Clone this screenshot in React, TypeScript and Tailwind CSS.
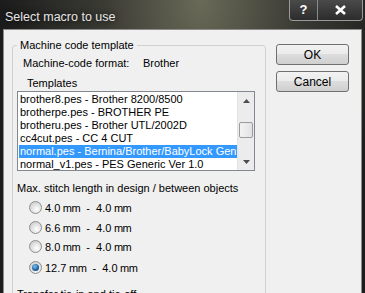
import React from "react";

const templates = [
  "brother8.pes - Brother 8200/8500",
  "brotherpe.pes - BROTHER PE",
  "brotheru.pes - Brother UTL/2002D",
  "cc4cut.pes - CC 4 CUT",
  "normal.pes - Bernina/Brother/BabyLock Gen",
  "normal_v1.pes - PES Generic Ver 1.0",
];

const stitchOptions = [
  { a: "4.0", b: "4.0" },
  { a: "6.6", b: "4.0" },
  { a: "8.0", b: "4.0" },
  { a: "12.7", b: "4.0" },
];

function Radio({ checked }: { checked?: boolean }) {
  return (
    <span className="w-[13px] h-[13px] rounded-full border border-[#8e8f8f] bg-[radial-gradient(circle_at_60%_65%,#ffffff,#d4d4d4_70%,#bcbcbc)] flex items-center justify-center shrink-0">
      {checked && (
        <span className="w-[7px] h-[7px] rounded-full bg-[radial-gradient(circle_at_40%_35%,#7fc3f0,#1d5e9c_60%,#0c3c6e)]" />
      )}
    </span>
  );
}

function ScrollBar() {
  return (
    <div className="w-[17px] flex flex-col bg-[#ececec] border-l border-[#e3e3e3]">
      <div className="h-[17px] flex items-center justify-center">
        <svg width="7" height="4" viewBox="0 0 7 4">
          <path d="M0 4 L3.5 0 L7 4 Z" fill="#4d4d4d" />
        </svg>
      </div>
      <div className="h-[13px]" />
      <div className="h-[16px] mx-[1px] rounded-[2px] border border-[#9a9a9a] bg-[linear-gradient(to_right,#f3f3f3,#e2e2e2)]" />
      <div className="flex-1" />
      <div className="h-[17px] flex items-center justify-center">
        <svg width="7" height="4" viewBox="0 0 7 4">
          <path d="M0 0 L3.5 4 L7 0 Z" fill="#4d4d4d" />
        </svg>
      </div>
    </div>
  );
}

function DialogButton({ label }: { label: string }) {
  return (
    <button className="w-[73px] h-[21px] rounded-[3px] border border-[#707070] bg-[linear-gradient(to_bottom,#f2f2f2_0%,#ebebeb_45%,#dddddd_50%,#cfcfcf_100%)] text-[12px] text-black leading-none">
      {label}
    </button>
  );
}

export default function App() {
  return (
    <div
      className="w-[365px] h-[293px] overflow-hidden flex flex-col bg-[radial-gradient(ellipse_at_55%_0%,#6a6a58_0%,#3a3a34_35%,#1c1c1c_70%)]"
      style={{ fontFamily: '"Liberation Sans", Arial, sans-serif' }}
    >
      {/* title bar */}
      <div className="h-[29px] flex items-start shrink-0">
        <div className="pl-[5px] pt-[8px] text-[12.5px] text-[#e6e6e6] [text-shadow:0_0_6px_#000]">
          Select macro to use
        </div>
        <div className="ml-auto mr-[2px] flex h-[21px] rounded-b-[4px] border border-t-0 border-[#9a9a9a] bg-[linear-gradient(to_bottom,#4a4a4a,#2c2c2c)] overflow-hidden">
          <div className="w-[28px] flex items-center justify-center text-white font-bold text-[13px] border-r border-[#8a8a8a]">
            ?
          </div>
          <div className="w-[44px] flex items-center justify-center">
            <svg width="11" height="10" viewBox="0 0 11 10">
              <path d="M1 1 L10 9 M10 1 L1 9" stroke="#ffffff" strokeWidth="2.6" />
            </svg>
          </div>
        </div>
      </div>

      {/* client area */}
      <div className="flex-1 mx-[3px] bg-[#f0f0f0] border border-[#8c8c8c] flex text-[11px] text-black">
        <div className="pl-[8px] pt-[8px] w-[262px] shrink-0">
          <fieldset className="border border-[#d0d0d0] rounded-[3px] h-[300px] pl-[4px] pr-[10px]">
            <legend className="px-[3px] text-[11px] leading-[14px]">Machine code template</legend>
            <div className="flex mt-[4px] ml-[6px] text-[11px] leading-[14px]">
              <span className="w-[120px]">Machine-code format:</span>
              <span>Brother</span>
            </div>
            <div className="mt-[6px] ml-[10px] text-[11px] leading-[14px]">Templates</div>
            <div className="mt-[1px] h-[80px] border border-[#828790] bg-white flex">
              <div className="flex-1 pt-[1px] pl-[1px] overflow-hidden">
                {templates.map((t, i) => (
                  <div
                    key={t}
                    className={
                      "h-[13px] leading-[13px] text-[11px] whitespace-nowrap pl-[1px] " +
                      (i === 4 ? "bg-[#3399ff] text-white" : "")
                    }
                  >
                    {t}
                  </div>
                ))}
              </div>
              <ScrollBar />
            </div>
            <div className="mt-[10px] text-[11px] leading-[14px]">
              Max. stitch length in design / between objects
            </div>
            <div className="mt-[6px] ml-[12px] flex flex-col">
              {stitchOptions.map((o, i) => (
                <div
                  key={o.a}
                  className={
                    "flex items-center gap-[3px] h-[13px] " +
                    (i === 1 ? "mt-[7px]" : i === 2 ? "mt-[6px]" : i === 3 ? "mt-[8px]" : "")
                  }
                >
                  <Radio checked={i === 3} />
                  <span className="text-[11px] leading-[14px] whitespace-pre">
                    {o.a}
                    <span className="tracking-[-0.5px]"> mm</span>
                    {"  -  "}
                    {o.b}
                    <span className="tracking-[-0.5px]"> mm</span>
                  </span>
                </div>
              ))}
            </div>
            <div className="mt-[13px] text-[11px] leading-[14px]">Transfer tie-in and tie-off</div>
          </fieldset>
        </div>
        <div className="ml-[10px] pt-[14px] flex flex-col gap-[6px]">
          <DialogButton label="OK" />
          <DialogButton label="Cancel" />
        </div>
      </div>
    </div>
  );
}
